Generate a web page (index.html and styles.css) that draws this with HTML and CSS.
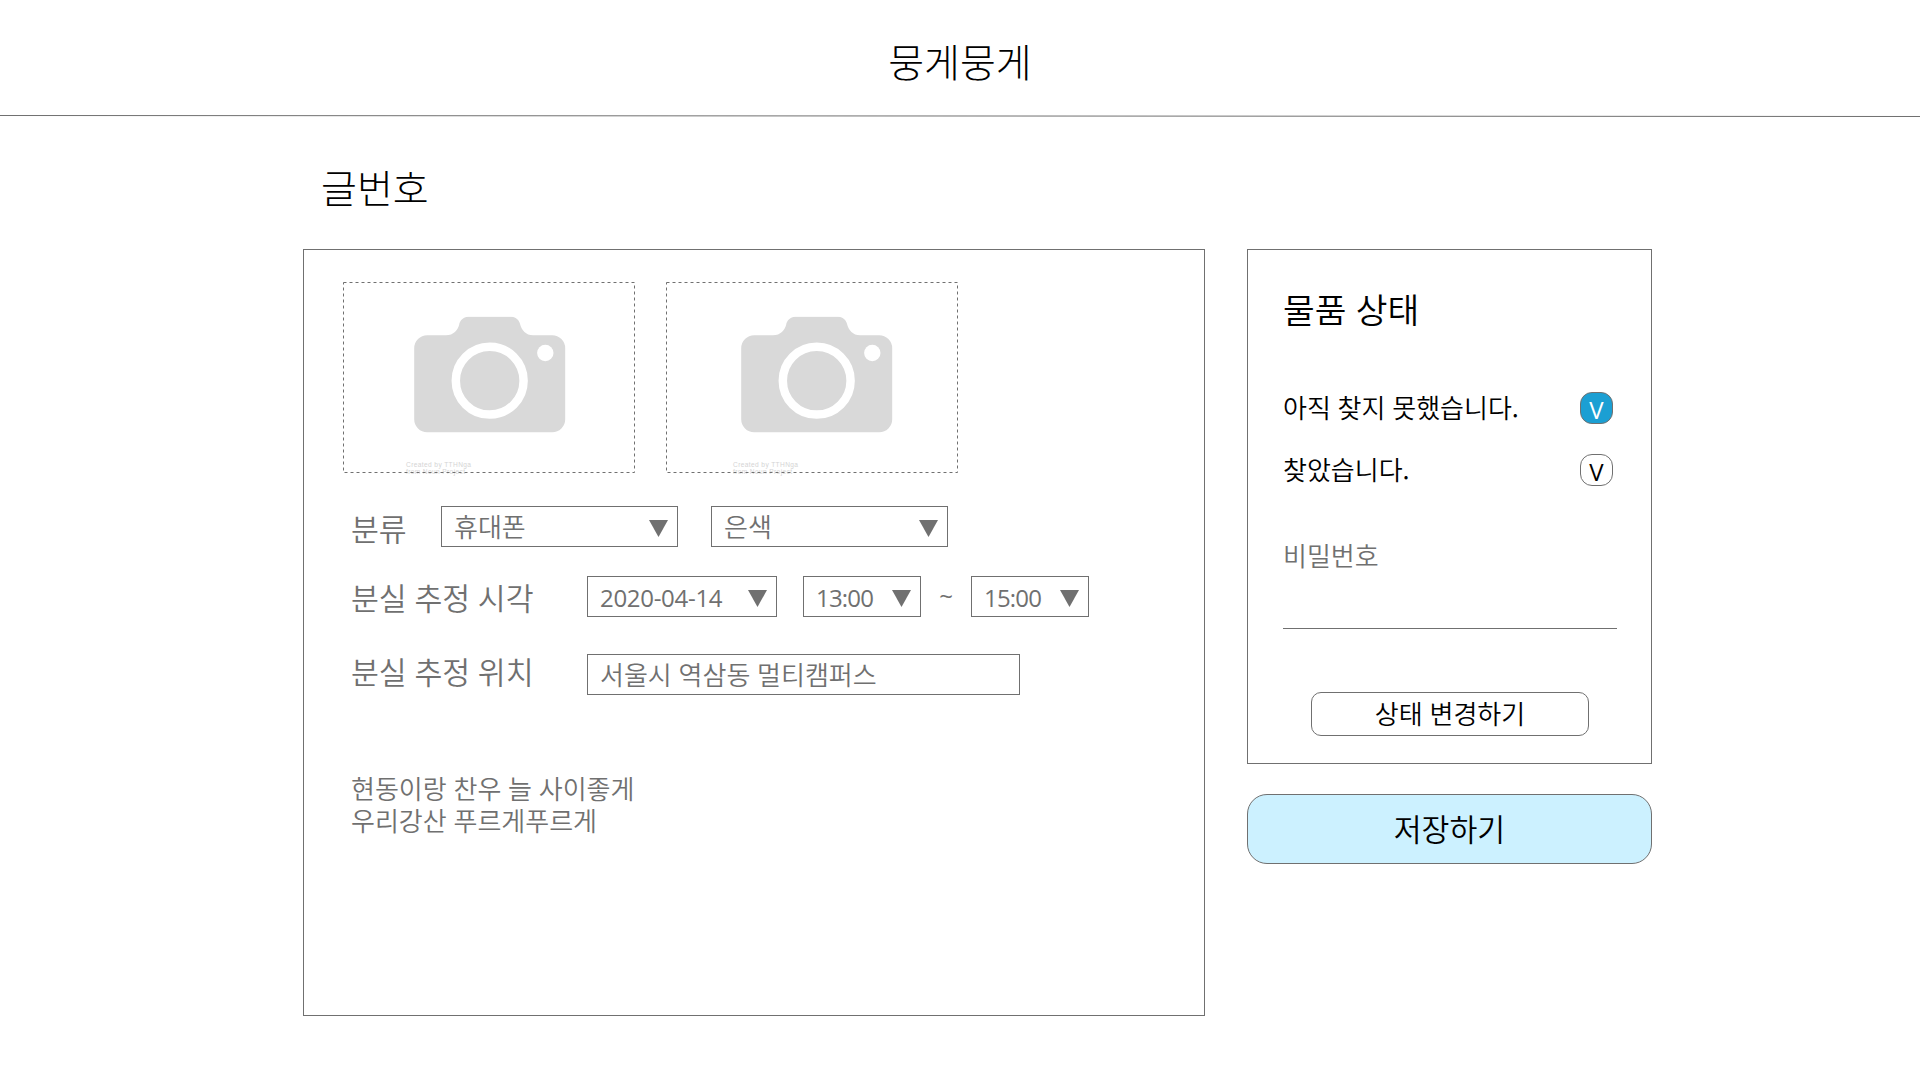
FILE: index.html
```html
<!DOCTYPE html>
<html lang="ko">
<head>
<meta charset="utf-8">
<title>뭉게뭉게</title>
<link rel="stylesheet" href="styles.css">
</head>
<body>
<svg class="defs" width="0" height="0" aria-hidden="true">
  <symbol id="camera" viewBox="0 0 152 160">
    <path fill="#d9d9d9" d="M13 18.8H32C39.500 18.800 44 13.500 45.200 8C45.800 4 49.500 .2 54 .2H97.500C102 .2 105.500 4 106.200 8C107.500 13.500 112 18.800 119 18.800H138.200A13 13 0 0 1 151.200 31.800V102.800A13 13 0 0 1 138.200 115.800H13.200A13 13 0 0 1 .2 102.800V31.800A13 13 0 0 1 13.200 18.800Z"/>
    <circle cx="75.700" cy="64.200" r="33.900" fill="none" stroke="#fff" stroke-width="8.500"/>
    <circle cx="131.300" cy="36.500" r="8.200" fill="#fff"/>
  </symbol>
</svg>
<header class="header">
  <h1 class="brand">뭉게뭉게</h1>
  <svg class="rule" width="1920" height="3"><path d="M0 .5L1920 1.500" stroke="#707070"/></svg>
</header>
<main class="page">
  <h2 class="post-title">글번호</h2>
  <div class="columns">
    <section class="panel detail">
      <div class="photos">
        <svg class="photo" width="292" height="191">
          <use href="#camera" x="71" y="34.500" width="152" height="160"/>
          <g class="credit"><text x="63" y="184.800" textLength="65">Created by TTHNga</text><text x="63" y="191.800" textLength="59">from Noun Project</text></g>
          <rect class="frame" x=".5" y=".5" width="291" height="190"/>
        </svg>
        <svg class="photo" width="292" height="191">
          <use href="#camera" x="75" y="34.500" width="152" height="160"/>
          <g class="credit"><text x="67" y="184.800" textLength="65">Created by TTHNga</text><text x="67" y="191.800" textLength="59">from Noun Project</text></g>
          <rect class="frame" x=".5" y=".5" width="291" height="190"/>
        </svg>
      </div>
      <div class="row row-kind">
        <span class="label label-short">분류</span>
        <div class="field kind"><span>휴대폰</span><i class="arrow"></i></div>
        <div class="field kind"><span>은색</span><i class="arrow"></i></div>
      </div>
      <div class="row row-time">
        <span class="label">분실 추정 시각</span>
        <div class="field date num"><span>2020-04-14</span><i class="arrow"></i></div>
        <div class="field time num"><span>13:00</span><i class="arrow"></i></div>
        <span class="tilde num">~</span>
        <div class="field time num"><span>15:00</span><i class="arrow"></i></div>
      </div>
      <div class="row row-place">
        <span class="label">분실 추정 위치</span>
        <div class="field place"><span>서울시 역삼동 멀티캠퍼스</span></div>
      </div>
      <p class="memo">현동이랑 찬우 늘 사이좋게<br>우리강산 푸르게푸르게</p>
    </section>
    <aside class="side">
      <section class="panel status">
        <h3 class="status-title">물품 상태</h3>
        <div class="option"><span>아직 찾지 못했습니다.</span><span class="check on">V</span></div>
        <div class="option"><span>찾았습니다.</span><span class="check">V</span></div>
        <div class="password">비밀번호</div>
        <button class="change">상태 변경하기</button>
      </section>
      <button class="save">저장하기</button>
    </aside>
  </div>
</main>
</body>
</html>
```
FILE: styles.css
```css
* { box-sizing: border-box; }
body {
  margin: 0;
  background: #fff;
  color: #000;
  font: 350 26px/32px "Noto Sans CJK KR", sans-serif;
  word-spacing: -.5px;
}
h1, h2, h3, p { margin: 0; font-weight: 300; }
.defs { display: block; height: 0; }
.header { height: 118px; display: flex; flex-direction: column; align-items: center; }
.brand { height: 115px; padding-top: 30px; font-size: 39px; line-height: 60px; }
.rule { display: block; flex: none; }
.page { width: 1349px; margin-left: 303px; }
.post-title { height: 131px; padding: 38px 0 0 18px; font-size: 39px; line-height: 60px; }
.columns { display: flex; gap: 42px; align-items: flex-start; }
.panel { border: 1px solid #707070; }
.detail { width: 902px; height: 767px; padding: 32px 0 0 39px; color: #707070; }
.photos { display: flex; gap: 31px; height: 224px; }
.photo { display: block; overflow: visible; }
.frame { fill: none; stroke: #707070; stroke-dasharray: 3 3; }
.credit { font: 400 6.600px "Liberation Sans", sans-serif; fill: #d4d4d4; word-spacing: 0; }
.row { display: flex; height: 41px; padding-left: 8px; }
.label { width: 236px; font-size: 30.300px; line-height: 43px; word-spacing: -.8px; white-space: nowrap; }
.label-short { width: 90px; line-height: 45px; }
.field {
  display: flex;
  align-items: center;
  justify-content: space-between;
  height: 41px;
  padding: 0 9px 0 12px;
  border: 1px solid #707070;
  white-space: nowrap;
}
.field span { margin-top: -1px; }
.kind { width: 237px; margin-right: 33px; }
.arrow { width: 19px; height: 17px; margin-top: 4px; background: #707070; clip-path: polygon(0 0, 100% 0, 50% 100%); }
.num { font: 400 24px/32px "Open Sans", "Noto Sans", sans-serif; letter-spacing: -.3px; }
.num span { margin-top: 3px; }
.row-time { margin-top: 29px; }
.date { width: 190px; }
.time { width: 118px; letter-spacing: -.8px; }
.date + .time { margin-left: 26px; }
.tilde { width: 50px; text-align: center; padding-top: 4px; }
.row-place { margin-top: 37px; }
.row-place .label { line-height: 35px; }
.place { width: 433px; }
.memo { margin: 77px 0 0 8px; font-weight: 350; }
.side { width: 405px; }
.status { height: 515px; padding: 36px 38px 0 35px; display: flex; flex-direction: column; }
.status-title { height: 106px; font-size: 34.500px; line-height: 45px; word-spacing: -.5px; font-weight: 350; }
.option { display: flex; justify-content: space-between; align-items: center; height: 32px; margin-bottom: 30px; }
.option > span:first-child { margin-top: -2px; }
.check {
  width: 33px;
  height: 32px;
  border: 1px solid #707070;
  border-radius: 12px;
  font: 400 24px/33px "Open Sans", "Noto Sans", sans-serif;
  text-align: center;
}
.on { background: #1b9fd3; color: #fff; }
.password { width: 334px; height: 90px; margin: 23px 0 0; border-bottom: 1px solid #707070; color: #707070; }
.change, .save { border: 1px solid #707070; font-family: inherit; font-weight: 350; color: #000; padding: 0 0 2px; word-spacing: -.5px; }
.change { width: 278px; height: 44px; margin: 63px 0 0 28px; border-radius: 10px; background: #fff; font-size: 26px; line-height: 32px; }
.save { display: block; width: 405px; height: 70px; margin-top: 30px; border-radius: 20px; background: #ccf1ff; font-size: 30.300px; line-height: 40px; }
```
